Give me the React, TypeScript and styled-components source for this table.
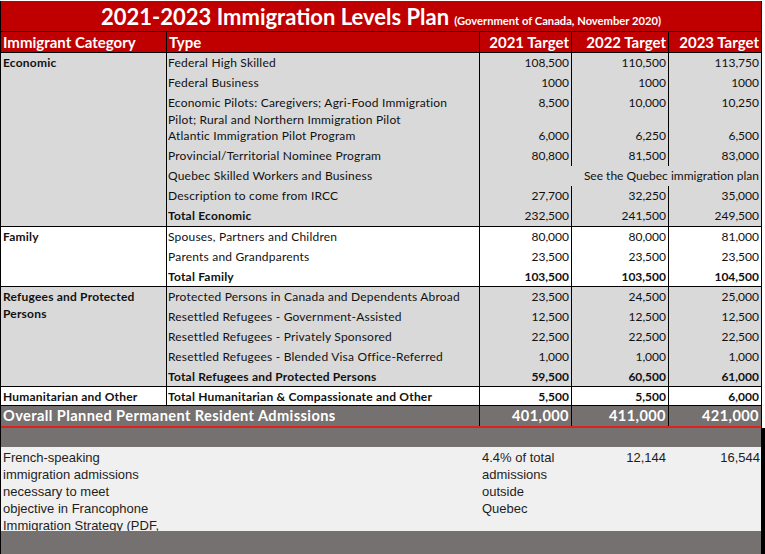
import React from "react";
import styled, { createGlobalStyle } from "styled-components";

const Global = createGlobalStyle`
  html, body { margin: 0; padding: 0; background: #fff; overflow: hidden; }
  body { width: 765px; height: 554px; }
`;

const SHEET_FONT = `Lato, "Open Sans", sans-serif`;
const COLS = "313px 92px 97px 92px";

const Page = styled.div`
  width: 765px;
  height: 554px;
  box-sizing: border-box;
  padding-top: 1px;
  display: flex;
  flex-direction: column;
  background: #fff;
`;

const Sheet = styled.div`
  width: 762px;
  box-sizing: border-box;
  border-left: 1px solid #000;
  border-right: 1px solid #000;
  font-family: ${SHEET_FONT};
  color: #111;
`;

const Title = styled.div`
  height: 31px;
  box-sizing: border-box;
  border-bottom: 1px solid #000;
  background: #c00000;
  color: #fff;
  font-weight: 700;
  text-align: center;
  line-height: 30px;
  padding-top: 1px;
  white-space: nowrap;
`;

const TitleMain = styled.span`
  font-size: 22px;
`;

const TitleNote = styled.span`
  font-size: 11.2px;
  margin-left: 5px;
`;

const HeadRow = styled.div`
  display: grid;
  grid-template-columns: 166px ${COLS};
  height: 21px;
  box-sizing: border-box;
  border-bottom: 1px solid #000;
  background: #c00000;
  color: #fff;
  font-weight: 700;
  font-size: 15px;
  line-height: 20px;
`;

const HeadCell = styled.div<{ $num?: boolean; $last?: boolean }>`
  border-right: ${(p) => (p.$last ? "none" : "1px solid #000")};
  text-align: ${(p) => (p.$num ? "right" : "left")};
  padding: ${(p) => (p.$num ? "0 2px 0 0" : "0 0 0 2px")};
  white-space: nowrap;
  overflow: hidden;
`;

const Group = styled.div<{ $bg: string }>`
  display: grid;
  grid-template-columns: 166px 594px;
  background: ${(p) => p.$bg};
  border-bottom: 1px solid #000;
  font-size: 12px;
`;

const Category = styled.div`
  border-right: 1px solid #000;
  font-weight: 700;
  padding: 1px 4px 0 2px;
  line-height: 17px;
  letter-spacing: 0.2px;
`;

const Lines = styled.div`
  display: flex;
  flex-direction: column;
`;

const Line = styled.div<{ $h: number; $top?: boolean }>`
  display: grid;
  grid-template-columns: ${COLS};
  height: ${(p) => p.$h}px;
  align-items: ${(p) => (p.$top ? "start" : "center")};
  line-height: 17px;
`;

const TypeCell = styled.div<{ $bold?: boolean }>`
  height: 100%;
  box-sizing: border-box;
  border-right: 1px solid #000;
  padding: 1px 0 0 1px;
  font-weight: ${(p) => (p.$bold ? 700 : 400)};
  letter-spacing: 0.2px;
  display: flex;
  flex-direction: column;
  white-space: nowrap;
`;

const NumCell = styled.div<{ $bold?: boolean; $last?: boolean; $span?: number }>`
  height: 100%;
  box-sizing: border-box;
  grid-column: span ${(p) => p.$span ?? 1};
  border-right: ${(p) => (p.$last ? "none" : "1px solid #000")};
  text-align: right;
  padding: 1px 2px 0 0;
  font-weight: ${(p) => (p.$bold ? 700 : 400)};
  white-space: nowrap;
`;

const Overall = styled.div`
  display: grid;
  grid-template-columns: 479px 92px 97px 92px;
  height: 22px;
  box-sizing: border-box;
  background: #767171;
  border-bottom: 2px solid #e0211b;
  color: #fff;
  font-weight: 700;
  font-size: 14.6px;
  line-height: 20px;
  letter-spacing: 0.4px;
`;

const OverallCell = styled.div<{ $num?: boolean; $last?: boolean }>`
  border-right: ${(p) => (p.$last ? "none" : "1px solid #000")};
  text-align: ${(p) => (p.$num ? "right" : "left")};
  padding: ${(p) => (p.$num ? "0 2px 0 0" : "0 0 0 2px")};
  white-space: nowrap;
`;

const Bottom = styled.div`
  flex: 1;
  width: 765px;
  box-sizing: border-box;
  border-left: 1px solid #000;
  border-right: 4px solid #000;
  background: #767171;
  display: flex;
  flex-direction: column;
`;

const Band = styled.div`
  height: 19px;
`;

const Panel = styled.div`
  height: 84px;
  background: #f0f0f0;
  display: grid;
  grid-template-columns: 166px ${COLS};
  overflow: hidden;
  font-family: "Liberation Sans", Arial, sans-serif;
  font-size: 13px;
  line-height: 17px;
  color: #1e1e1e;
`;

const PanelCell = styled.div<{ $num?: boolean; $pr?: number }>`
  padding: 2px ${(p) => p.$pr ?? 0}px 0 ${(p) => (p.$num ? 0 : 2)}px;
  text-align: ${(p) => (p.$num ? "right" : "left")};
`;

type Row = {
  type: React.ReactNode;
  v?: [string, string, string];
  span?: string;
  bold?: boolean;
  boldNums?: boolean;
  h?: number;
  top?: boolean;
};

const economic: Row[] = [
  { type: "Federal High Skilled", v: ["108,500", "110,500", "113,750"] },
  { type: "Federal Business", v: ["1000", "1000", "1000"] },
  {
    type: (
      <>
        <span>Economic Pilots: Caregivers; Agri-Food Immigration</span>
        <span>Pilot; Rural and Northern Immigration Pilot</span>
      </>
    ),
    v: ["8,500", "10,000", "10,250"],
    h: 33,
    top: true,
  },
  { type: "Atlantic Immigration Pilot Program", v: ["6,000", "6,250", "6,500"] },
  { type: "Provincial/Territorial Nominee Program", v: ["80,800", "81,500", "83,000"] },
  { type: "Quebec Skilled Workers and Business", span: "See the Quebec immigration plan" },
  { type: "Description to come from IRCC", v: ["27,700", "32,250", "35,000"] },
  { type: "Total Economic", v: ["232,500", "241,500", "249,500"], bold: true },
];

const family: Row[] = [
  { type: "Spouses, Partners and Children", v: ["80,000", "80,000", "81,000"] },
  { type: "Parents and Grandparents", v: ["23,500", "23,500", "23,500"] },
  { type: "Total Family", v: ["103,500", "103,500", "104,500"], bold: true, boldNums: true, h: 19 },
];

const refugees: Row[] = [
  { type: "Protected Persons in Canada and Dependents Abroad", v: ["23,500", "24,500", "25,000"] },
  { type: "Resettled Refugees - Government-Assisted", v: ["12,500", "12,500", "12,500"] },
  { type: "Resettled Refugees - Privately Sponsored", v: ["22,500", "22,500", "22,500"] },
  { type: "Resettled Refugees - Blended Visa Office-Referred", v: ["1,000", "1,000", "1,000"] },
  {
    type: "Total Refugees and Protected Persons",
    v: ["59,500", "60,500", "61,000"],
    bold: true,
    boldNums: true,
    h: 19,
  },
];

const humanitarian: Row[] = [
  {
    type: "Total Humanitarian & Compassionate and Other",
    v: ["5,500", "5,500", "6,000"],
    bold: true,
    boldNums: true,
    h: 18,
  },
];

function GroupBlock({ name, bg, rows }: { name: string; bg: string; rows: Row[] }) {
  return (
    <Group $bg={bg}>
      <Category>{name}</Category>
      <Lines>
        {rows.map((r, i) => (
          <Line key={i} $h={r.h ?? 20} $top={r.top}>
            <TypeCell $bold={r.bold}>{r.type}</TypeCell>
            {r.span ? (
              <NumCell $span={3} $last>
                {r.span}
              </NumCell>
            ) : (
              r.v!.map((n, j) => (
                <NumCell key={j} $bold={r.boldNums} $last={j === 2}>
                  {n}
                </NumCell>
              ))
            )}
          </Line>
        ))}
      </Lines>
    </Group>
  );
}

export default function App() {
  return (
    <>
      <Global />
      <Page>
        <Sheet>
          <Title>
            <TitleMain>2021-2023 Immigration Levels Plan</TitleMain>
            <TitleNote>(Government of Canada, November 2020)</TitleNote>
          </Title>
          <HeadRow>
            <HeadCell>Immigrant Category</HeadCell>
            <HeadCell>Type</HeadCell>
            <HeadCell $num>2021 Target</HeadCell>
            <HeadCell $num>2022 Target</HeadCell>
            <HeadCell $num $last>
              2023 Target
            </HeadCell>
          </HeadRow>
          <GroupBlock name="Economic" bg="#d9d9d9" rows={economic} />
          <GroupBlock name="Family" bg="#ffffff" rows={family} />
          <GroupBlock name="Refugees and Protected Persons" bg="#d9d9d9" rows={refugees} />
          <GroupBlock name="Humanitarian and Other" bg="#ffffff" rows={humanitarian} />
          <Overall>
            <OverallCell>Overall Planned Permanent Resident Admissions</OverallCell>
            <OverallCell $num>401,000</OverallCell>
            <OverallCell $num>411,000</OverallCell>
            <OverallCell $num $last>
              421,000
            </OverallCell>
          </Overall>
        </Sheet>
        <Bottom>
          <Band />
          <Panel>
            <PanelCell $pr={5}>
              French-speaking immigration admissions necessary to meet objective in
              Francophone Immigration Strategy (PDF, 2.6 MB)
            </PanelCell>
            <PanelCell />
            <PanelCell $pr={4}>4.4% of total admissions outside Quebec</PanelCell>
            <PanelCell $num $pr={3}>
              12,144
            </PanelCell>
            <PanelCell $num $pr={1}>
              16,544
            </PanelCell>
          </Panel>
        </Bottom>
      </Page>
    </>
  );
}
